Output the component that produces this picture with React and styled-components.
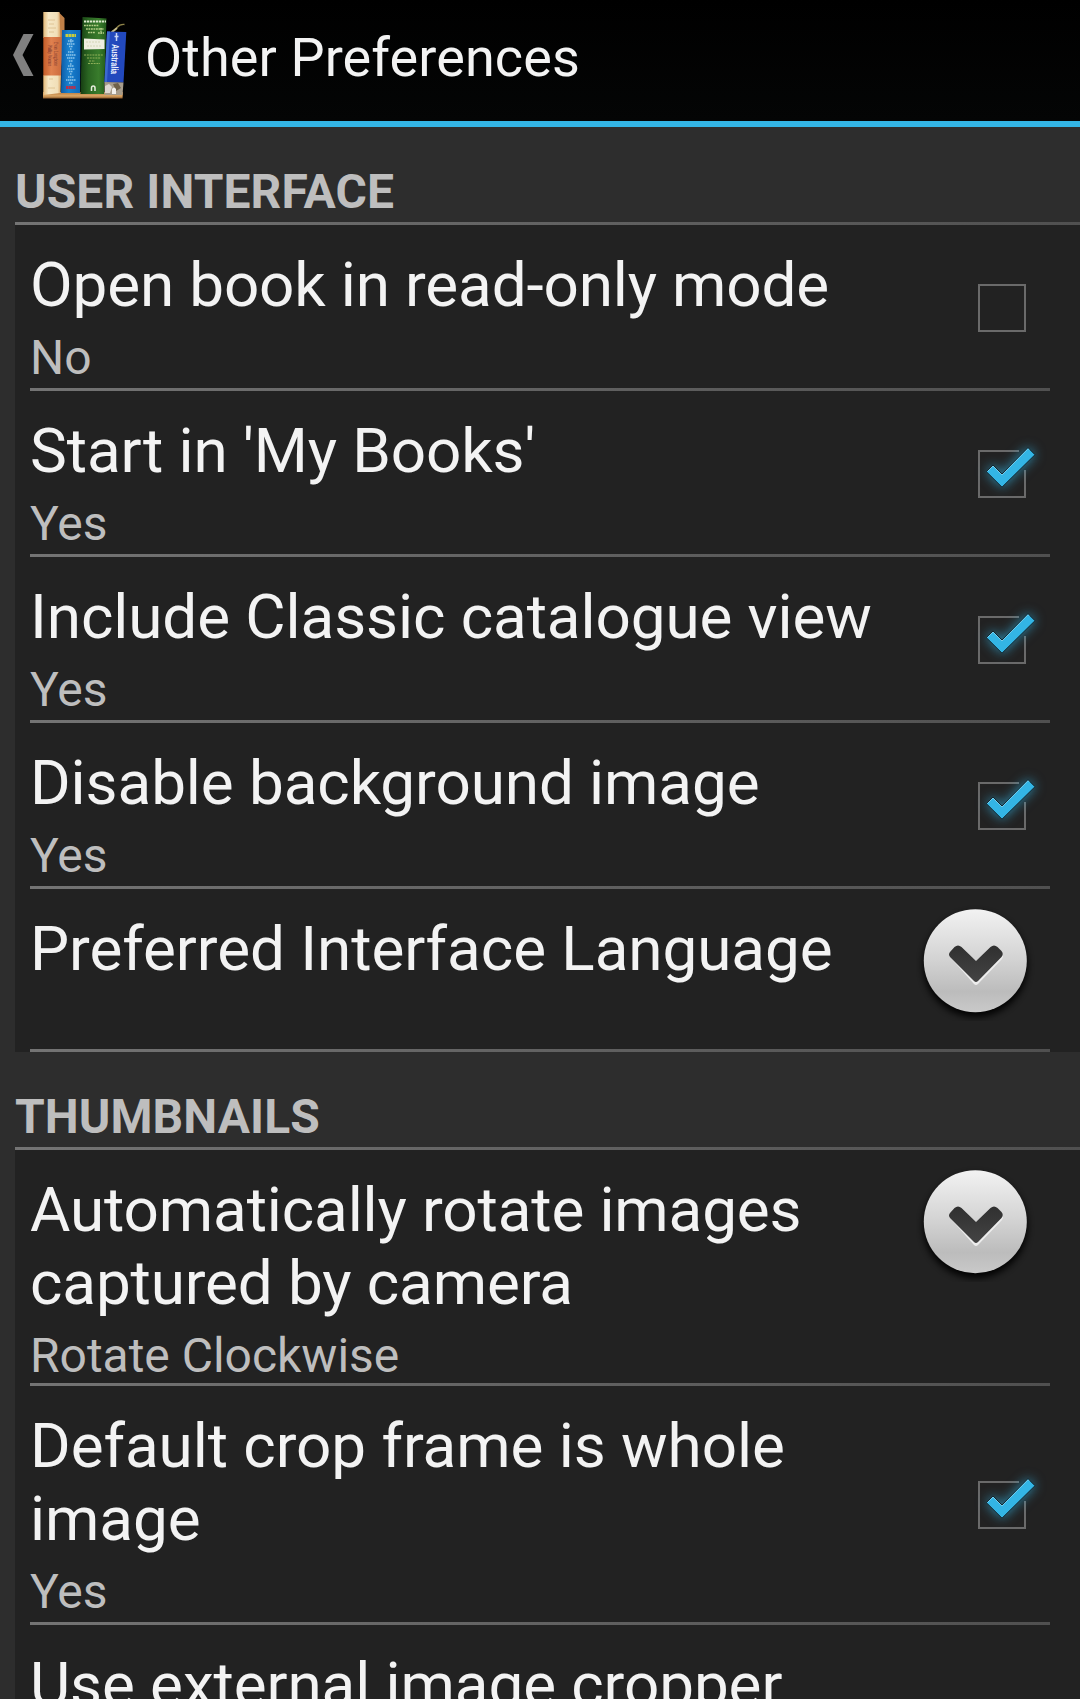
import React from 'react';
import styled, { createGlobalStyle } from 'styled-components';

const Global = createGlobalStyle`
  body { margin: 0; background: #2d2d2d; font-family: Roboto, "Liberation Sans", sans-serif; }
`;

const Screen = styled.div`
  width: 1080px;
  height: 1699px;
  overflow: hidden;
  background: #2d2d2d;
`;

const ActionBar = styled.header`
  display: flex;
  align-items: flex-start;
  box-sizing: border-box;
  height: 127px;
  padding: 0 0 0 12px;
  background: linear-gradient(#000000, #040505);
  border-bottom: 6px solid #33b5e5;
`;

const BackArrow = styled.svg`
  flex: none;
  margin-top: 33px;
  width: 23px;
  height: 44px;
`;

const Logo = styled.svg`
  flex: none;
  margin: 8px 0 0 5px;
  width: 92px;
  height: 94px;
`;

const ScreenTitle = styled.h1`
  margin: 26px 0 0 13px;
  font-size: 54px;
  font-weight: 400;
  line-height: 64px;
  letter-spacing: 0.1px;
  color: #f3f3f3;
  white-space: nowrap;
`;

const Section = styled.section`
  padding-left: 15px;
`;

const SectionTitle = styled.h2`
  box-sizing: border-box;
  height: 95px;
  margin: 0;
  padding-top: 36px;
  font-size: 48px;
  font-weight: 700;
  line-height: 57px;
  letter-spacing: 0.08px;
  color: #bebebe;
  white-space: nowrap;
`;

const Divider = styled.div`
  flex: none;
  height: 3px;
  background: linear-gradient(90deg, #747474, #505050);
`;

const Panel = styled.div`
  background: #222222;
`;

const Row = styled.div`
  display: flex;
  flex-direction: column;
  box-sizing: border-box;
  height: ${(p) => p.$height}px;
  padding: 0 30px 0 15px;
`;

const RowBody = styled.div`
  flex: 1;
  min-height: 0;
  display: flex;
  justify-content: space-between;
  align-items: ${(p) => (p.$top ? 'flex-start' : 'center')};
`;

const Texts = styled.div`
  align-self: flex-start;
  padding-top: 23px;
  width: 860px;
`;

const Title = styled.div`
  font-size: 62px;
  line-height: 73px;
  letter-spacing: ${(p) => p.$track}px;
  color: #f3f3f3;
  white-space: pre-line;
`;

const Summary = styled.div`
  margin-top: 8px;
  font-size: 48px;
  line-height: 57px;
  letter-spacing: -0.02px;
  color: #bebebe;
`;

const CheckSvg = styled.svg`
  flex: none;
  margin: ${(p) => p.$drop}px 24px 0 0;
  width: 48px;
  height: 48px;
  overflow: visible;
`;

const CheckGlow = styled.g`
  filter: drop-shadow(0 0 6px rgba(51, 181, 229, 0.7));
`;

const MoreButton = styled.svg`
  flex: none;
  margin: 12px 14px 0 0;
  width: 120px;
  height: 120px;
`;

const CheckBox = ({ on, drop = 3 }) => (
  <CheckSvg viewBox="0 0 48 48" $drop={drop}>
    {on ? (
      <>
        <path d="M41 1H1V47H47V20" fill="none" stroke="#6a6a6a" strokeWidth="2" />
        <CheckGlow>
          <path d="M8.400 21.700L15 15L24 24L50 -2.300L57 4.700L24 37.200Z" fill="#33b5e5" stroke="#11242c" strokeWidth="1" />
        </CheckGlow>
        <path d="M9.500 21.500L15 16L24 25L50 -1.200L51 -.2" fill="none" stroke="#74cdee" strokeWidth="1" />
      </>
    ) : (
      <rect x="1" y="1" width="46" height="46" fill="none" stroke="#6a6a6a" strokeWidth="2" />
    )}
  </CheckSvg>
);

const More = () => (
  <MoreButton viewBox="0 0 120 120">
    <defs>
      <linearGradient id="face" x1="0" y1="0" x2="0" y2="1">
        <stop offset="0" stopColor="#f2f2f2" />
        <stop offset=".5" stopColor="#d2d2d2" />
        <stop offset=".8" stopColor="#bcbcbc" />
        <stop offset="1" stopColor="#c9c9c9" />
      </linearGradient>
      <linearGradient id="chev" x1="0" y1="0" x2="0" y2="1">
        <stop offset="0" stopColor="#303030" />
        <stop offset="1" stopColor="#444444" />
      </linearGradient>
      <filter id="soft" x="-20%" y="-20%" width="140%" height="140%">
        <feGaussianBlur stdDeviation="3.500" />
      </filter>
    </defs>
    <circle cx="59.3" cy="64" r="52" fill="#000" opacity=".95" filter="url(#soft)" />
    <circle cx="59.3" cy="59.7" r="51.5" fill="url(#face)" />
    <path d="M33 55L38 48Q42 45 45 48L60 62L74 48Q78 45 82 48L86 52Q88 55 86 58L62 83Q60 85 58 83Z" fill="#ededed" />
    <path d="M34 51L38.500 46Q42 43 45.500 46L60 60L74.500 46Q78 43 81.500 46L85.500 50Q88 53 85.500 56L62 80Q60 82 58 80L34 56Q32 53.500 34 51Z" fill="url(#chev)" />
  </MoreButton>
);

const SpineText = styled.text`
  font-family: ${(p) => (p.$serif ? '"Liberation Serif", serif' : '"Liberation Sans", sans-serif')};
  font-size: ${(p) => p.$size}px;
  font-weight: ${(p) => (p.$serif ? 400 : 700)};
`;

const Books = () => (
  <Logo viewBox="40 8 92 94">
    <defs>
      <linearGradient id="cream" x1="0" x2="1" y1="0" y2="0">
        <stop offset="0" stopColor="#e3b878" />
        <stop offset=".3" stopColor="#f6e8c6" />
        <stop offset=".8" stopColor="#f1dfb8" />
        <stop offset="1" stopColor="#d9a566" />
      </linearGradient>
      <linearGradient id="orange" x1="0" x2="1" y1="0" y2="0">
        <stop offset="0" stopColor="#c45c28" />
        <stop offset=".4" stopColor="#e0814f" />
        <stop offset="1" stopColor="#c9683a" />
      </linearGradient>
      <linearGradient id="blue" x1="0" x2="1" y1="0" y2="0">
        <stop offset="0" stopColor="#0d5ba6" />
        <stop offset=".4" stopColor="#1b82cf" />
        <stop offset="1" stopColor="#0c66b8" />
      </linearGradient>
      <linearGradient id="green" x1="0" x2="1" y1="0" y2="0">
        <stop offset="0" stopColor="#163d12" />
        <stop offset=".3" stopColor="#2a6522" />
        <stop offset=".7" stopColor="#397c2c" />
        <stop offset="1" stopColor="#235a1b" />
      </linearGradient>
      <linearGradient id="shelf" x1="0" x2="0" y1="0" y2="1">
        <stop offset="0" stopColor="#b9783c" />
        <stop offset=".6" stopColor="#dba765" />
        <stop offset="1" stopColor="#8d5a2b" />
      </linearGradient>
    </defs>
    <path d="M43 92H123L122.500 98.500H43Z" fill="url(#shelf)" />
    <path d="M59 12.500L64.500 18V36L60 75V93H58Z" fill="#c08048" />
    <path d="M43.300 12H59.500L60.500 38H43.300Z" fill="url(#cream)" />
    <path d="M43.300 37H63L61 76H43.300Z" fill="url(#orange)" />
    <path d="M43.300 75.500H61L60.500 93L43.300 95Z" fill="url(#cream)" />
    <path d="M48 20H55M49 24H54M48 28H56M49 32H54M49 79H53M48 88H55" stroke="#d9bd8a" strokeWidth=".8" />
    <SpineText $serif $size={6.5} fill="#75322c" transform="translate(53.5 42) rotate(90)" textLength="24" lengthAdjust="spacingAndGlyphs">Evan Longbone</SpineText>
    <SpineText $serif $size={6.5} fill="#75322c" transform="translate(48 45) rotate(90)" textLength="21" lengthAdjust="spacingAndGlyphs">Philip Warner</SpineText>
    <path d="M62 30H80.500L80 93H61Z" fill="url(#blue)" />
    <path d="M65.500 35.500H76" stroke="#c9cc3d" strokeWidth="3" strokeDasharray="2.600 .4" />
    <path d="M71 39V43M68 41H74M67 44H75M69 46.500H73M70 49H72M68 52H74M66 55H76M67 58H75M69 61H73M70 64H72M68 66H74M67 69H75M69 71.500H73M70 74H72M68 77H74M66 80H76M69 83H73" stroke="#8cc4ea" strokeWidth="1.500" strokeDasharray="1.500 .5" />
    <path d="M66 87.500H75.500" stroke="#b82f4b" strokeWidth="3" strokeDasharray="2.200 .4" />
    <path d="M82.500 17L106.500 18.500L104 94H80.500Z" fill="url(#green)" />
    <path d="M84 21.500H106" stroke="#dde9cd" strokeWidth="2.200" strokeDasharray="2.300 .7" />
    <path d="M84 25.500H99M86 29H104M88 32.500H95M98 33H104M101 28V34" stroke="#b6cf88" strokeWidth="1.300" strokeDasharray="1.800 .7" />
    <path d="M84 38.500L104.500 39.500V49L84 49.500Z" fill="#efeee0" />
    <path d="M86 42H101M87 46H102" stroke="#d3d6b6" strokeWidth="1" strokeDasharray="2 1" />
    <path d="M84 55H103M87 58H101M89 61H95M88 63.500H100" stroke="#9bb85f" strokeWidth=".9" strokeDasharray="2 .8" />
    <path d="M91.500 91V88Q91.500 86 93.300 86Q95 86 95 88V91" fill="none" stroke="#e8eddd" strokeWidth="1.500" />
    <path d="M111 32Q115 31 117 27.500Q120 24 124.500 24.500" fill="none" stroke="#8e8349" strokeWidth="1.300" />
    <path d="M112 32L117 28" stroke="#c4ba87" strokeWidth="2" />
    <path d="M107 31.500L126.300 32L123.500 82.500H104.500Z" fill="#2249bd" />
    <path d="M107 31.500H110L107 82H104.500Z" fill="#3c69cf" />
    <path d="M116.500 33V41M114.500 36.500H118.500" stroke="#c8d5f5" strokeWidth="1.500" />
    <SpineText $size={10} fill="#f1f5ff" transform="translate(112 44) rotate(92)" textLength="30" lengthAdjust="spacingAndGlyphs">Australia</SpineText>
    <path d="M104.500 82L123.500 82.500L122.500 95H104.500Z" fill="#a79c8b" />
    <path d="M105 86L109 84L112 87L110 93H105Z" fill="#ddd8d2" />
    <path d="M113 84L118 83L121 88L116 91Z" fill="#6f614b" />
    <path d="M112 94V89Q114 86 116 89V94Z" fill="#f2f0ec" />
  </Logo>
);

const Pref = ({ title, summary, checked, more, height, drop, track = -0.09 }) => (
  <Row $height={height}>
    <RowBody $top={more}>
      <Texts>
        <Title $track={track}>{title}</Title>
        {summary && <Summary>{summary}</Summary>}
      </Texts>
      {more ? <More /> : <CheckBox on={checked} drop={drop} />}
    </RowBody>
    <Divider />
  </Row>
);

export default function App() {
  return (
    <Screen>
      <Global />
      <ActionBar>
        <BackArrow viewBox="0 0 23 44">
          <path d="M11.500 1H21.500L10.500 22L21.500 43H11.500L1 22Z" fill="#808080" />
        </BackArrow>
        <Books />
        <ScreenTitle>Other Preferences</ScreenTitle>
      </ActionBar>
      <Section>
        <SectionTitle>USER INTERFACE</SectionTitle>
        <Divider />
        <Panel>
          <Pref height={166} title="Open book in read-only mode" summary="No" track={-0.15} />
          <Pref height={166} title="Start in 'My Books'" summary="Yes" checked />
          <Pref height={166} title="Include Classic catalogue view" summary="Yes" checked />
          <Pref height={166} title="Disable background image" summary="Yes" checked />
          <Pref height={163} title="Preferred Interface Language" more track={-0.06} />
        </Panel>
      </Section>
      <Section>
        <SectionTitle>THUMBNAILS</SectionTitle>
        <Divider />
        <Panel>
          <Pref height={236} title={'Automatically rotate images\ncaptured by camera'} summary="Rotate Clockwise" more track={-0.13} />
          <Pref height={239} title={'Default crop frame is whole\nimage'} summary="Yes" checked drop={2} track={-0.06} />
          <Pref height={239} title="Use external image cropper" checked />
        </Panel>
      </Section>
    </Screen>
  );
}
